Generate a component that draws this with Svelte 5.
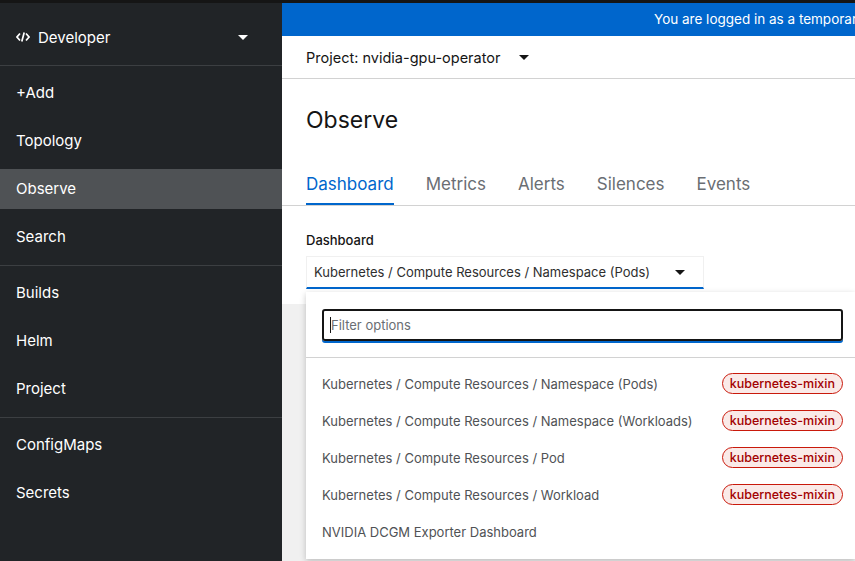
<script>
  const groups = [
    ['+Add', 'Topology', 'Observe', 'Search'],
    ['Builds', 'Helm', 'Project'],
    ['ConfigMaps', 'Secrets']
  ];
  const tabs = ['Dashboard', 'Metrics', 'Alerts', 'Silences', 'Events'];
  const options = [
    { name: 'Kubernetes / Compute Resources / Namespace (Pods)', tag: 'kubernetes-mixin' },
    { name: 'Kubernetes / Compute Resources / Namespace (Workloads)', tag: 'kubernetes-mixin' },
    { name: 'Kubernetes / Compute Resources / Pod', tag: 'kubernetes-mixin' },
    { name: 'Kubernetes / Compute Resources / Workload', tag: 'kubernetes-mixin' },
    { name: 'NVIDIA DCGM Exporter Dashboard' }
  ];
</script>

<div class="page">
  <aside class="sidebar">
    <div class="perspective">
      <svg class="code" viewBox="0 0 14 10" width="14" height="10">
        <path d="M4 1.5 L1 5 L4 8.5 M10 1.5 L13 5 L10 8.5 M8.2 0.5 L5.8 9.5" fill="none" stroke="#fff" stroke-width="1.7" />
      </svg>
      <span>Developer</span>
      <i class="caret light"></i>
    </div>
    {#each groups as group}
      <nav class="group">
        {#each group as item}
          <div class="item" class:active={item === 'Observe'}>{item}</div>
        {/each}
      </nav>
    {/each}
  </aside>

  <main class="main">
    <div class="banner">You are logged in as a temporary administrative user.</div>
    <div class="project">
      <span>Project: nvidia-gpu-operator</span>
      <i class="caret"></i>
    </div>
    <h1>Observe</h1>
    <div class="tabs">
      {#each tabs as tab, i}
        <div class="tab" class:current={i === 0}>{tab}</div>
      {/each}
    </div>
    <div class="filters">
      <div class="label">Dashboard</div>
      <div class="select">
        <span>Kubernetes / Compute Resources / Namespace (Pods)</span>
        <i class="caret"></i>
      </div>
    </div>
    <div class="content"></div>

    <div class="menu">
      <div class="search">
        <div class="input"><span class="cursor"></span>Filter options</div>
      </div>
      <ul>
        {#each options as opt}
          <li>
            <span>{opt.name}</span>
            {#if opt.tag}<span class="tag">{opt.tag}</span>{/if}
          </li>
        {/each}
      </ul>
    </div>
  </main>
</div>

<style>
  :global(body) {
    margin: 0;
    overflow: hidden;
    font-family: Inter, "Noto Sans", sans-serif;
  }

  .page {
    display: flex;
    width: 855px;
    height: 561px;
    overflow: hidden;
    background: #151515;
    padding-top: 3px;
    box-sizing: border-box;
  }

  .sidebar {
    width: 282px;
    flex: none;
    background: #212427;
    color: #fff;
    font-size: 15px;
  }

  .perspective {
    height: 63px;
    display: flex;
    align-items: center;
    padding: 6px 16px 0;
    box-sizing: border-box;
    gap: 8px;
    border-bottom: 1px solid #3c3f42;
  }

  .perspective span {
    flex: 1;
  }

  .group {
    padding: 7px 0 8px;
    border-bottom: 1px solid #3c3f42;
  }

  .group:last-child {
    border-bottom: none;
  }

  .item {
    height: 40px;
    line-height: 40px;
    padding: 0 16px;
    margin-bottom: 8px;
  }

  .item:last-child {
    margin-bottom: 0;
  }

  .item.active {
    background: #4f5255;
  }

  .caret {
    display: inline-block;
    width: 0;
    height: 0;
    border-left: 5px solid transparent;
    border-right: 5px solid transparent;
    border-top: 5px solid #151515;
  }

  .caret.light {
    border-top-color: #fff;
    margin-right: 18px;
  }

  .main {
    flex: 1;
    position: relative;
    display: flex;
    flex-direction: column;
    background: #fff;
    min-width: 0;
    color: #151515;
  }

  .banner {
    height: 33px;
    line-height: 33px;
    flex: none;
    background: #06c;
    color: #fff;
    font-size: 13.5px;
    white-space: nowrap;
    padding-left: 372px;
  }

  .project {
    height: 42px;
    flex: none;
    display: flex;
    align-items: center;
    gap: 19px;
    padding: 0 0 0 24px;
    font-size: 14.5px;
    border-bottom: 1px solid #d2d2d2;
  }

  h1 {
    margin: 25px 0 0 24px;
    font-size: 23px;
    font-weight: 400;
    line-height: 32px;
  }

  .tabs {
    display: flex;
    margin-top: 16px;
    height: 53px;
    padding-left: 24px;
    gap: 32px;
    border-bottom: 1px solid #d2d2d2;
    font-size: 17px;
    flex: none;
  }

  .tab {
    color: #6a6e73;
    padding-top: 21px;
    line-height: 22px;
    height: 53px;
    box-sizing: border-box;
  }

  .tab.current {
    color: #06c;
    border-bottom: 2px solid #06c;
  }

  .filters {
    height: 98px;
    flex: none;
    padding: 25px 0 0 24px;
    box-sizing: border-box;
  }

  .label {
    font-size: 13px;
    font-weight: 500;
    line-height: 18px;
  }

  .select {
    margin-top: 7px;
    width: 398px;
    height: 33px;
    box-sizing: border-box;
    display: flex;
    align-items: center;
    justify-content: space-between;
    padding: 0 18px 0 7px;
    font-size: 13px;
    color: #2e2e2e;
    border: 1px solid #f0f0f0;
    border-bottom: 2px solid #06c;
  }

  .content {
    flex: 1;
    background: #f0f0f0;
  }

  .menu {
    position: absolute;
    left: 24px;
    top: 289px;
    right: 0;
    height: 267px;
    background: #fff;
    box-shadow: 0 2px 6px rgba(3, 3, 3, 0.22);
  }

  .search {
    padding: 17px 12px 16px 16px;
    border-bottom: 1px solid #d2d2d2;
  }

  .input {
    height: 32px;
    box-sizing: border-box;
    border: 2px solid #151515;
    border-radius: 3px;
    box-shadow: 0 2px 0 #06c;
    display: flex;
    align-items: center;
    font-size: 13px;
    color: #6a6e73;
    padding-left: 6px;
  }

  .cursor {
    width: 1px;
    height: 16px;
    background: #151515;
  }

  ul {
    list-style: none;
    margin: 0;
    padding: 7px 12px 0 16px;
  }

  li {
    height: 37px;
    display: flex;
    align-items: center;
    justify-content: space-between;
    font-size: 13px;
    color: #4f5255;
  }

  .tag {
    font-size: 12.5px;
    font-weight: 500;
    color: #a30000;
    background: #faeae8;
    border: 1px solid #c9190b;
    border-radius: 30px;
    padding: 0 7px;
    line-height: 19px;
  }
</style>
